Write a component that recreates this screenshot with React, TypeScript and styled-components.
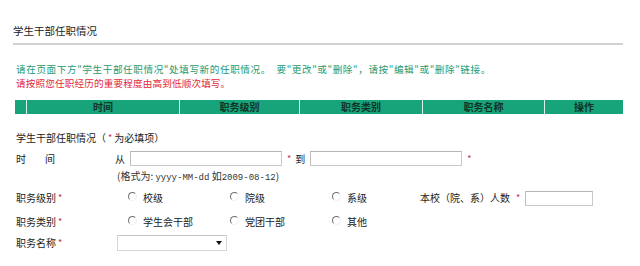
import React from 'react';
import styled, { createGlobalStyle } from 'styled-components';

const GlobalStyle = createGlobalStyle`
  html, body {
    margin: 0;
    padding: 0;
    background: #fff;
  }
  body {
    font-family: "Noto Sans CJK SC", "Liberation Sans", sans-serif;
    font-size: 10px;
    color: #222;
  }
`;

const Page = styled.div`
  width: 610px;
  margin-left: 13px;
  padding-top: 24px;
`;

const Title = styled.div`
  height: 14px;
  line-height: 14px;
  font-size: 10.5px;
  color: #1a1a1a;
`;

const Rule = styled.div`
  margin-top: 5px;
  height: 2px;
  background: #d2d2d2;
`;

const Notice = styled.div`
  margin-top: 17px;
  padding-left: 3px;
`;

const NoticeLine = styled.div<{ $tone: 'green' | 'red' }>`
  height: 14px;
  line-height: 14px;
  font-size: 9.6px;
  white-space: nowrap;
  letter-spacing: ${p => (p.$tone === 'green' ? '0.6px' : '0.15px')};
  color: ${p => (p.$tone === 'green' ? '#249a70' : '#e2283a')};
`;

const HeaderBar = styled.div`
  margin: 10px 0 0 2px;
  width: 608px;
  height: 14px;
  display: grid;
  grid-template-columns: 12px 153px 120px 123px 122px 78px;
  background: #18a47a;
`;

const HeaderCell = styled.div`
  line-height: 14px;
  text-align: center;
  font-weight: bold;
  font-size: 10px;
  color: #0f3326;
  border-right: 1px solid #d8f2e8;

  &:last-child {
    border-right: none;
  }
`;

const Form = styled.div`
  margin-top: 15px;
  padding-left: 3px;
`;

const Row = styled.div<{ $h: number; $mt?: number }>`
  height: ${p => p.$h}px;
  margin-top: ${p => p.$mt ?? 0}px;
  display: grid;
  grid-template-columns: 99px 1fr;
  align-items: center;
  line-height: 14px;
  white-space: nowrap;
`;

const FullRow = styled.div<{ $h: number }>`
  height: ${p => p.$h}px;
  display: flex;
  align-items: center;
  white-space: nowrap;
`;

const Label = styled.div`
  display: flex;
  align-items: center;
`;

const Spaced = styled.span`
  display: inline-block;
  width: 29px;
`;

const Star = styled.span`
  color: #c3304c;
  font-size: 9px;
  margin: 0 2px;
`;

const Field = styled.div`
  display: flex;
  align-items: center;
`;

const TextBox = styled.input<{ $w: number }>`
  box-sizing: border-box;
  width: ${p => p.$w}px;
  height: 15px;
  padding: 0 2px;
  border: 1px solid #c9c9c9;
  border-top-color: #b5b5b5;
  border-left-color: #bdbdbd;
  background: #fff;
  font-size: 10px;
  outline: none;
`;

const Word = styled.span<{ $ml?: number; $mr?: number }>`
  margin-left: ${p => p.$ml ?? 0}px;
  margin-right: ${p => p.$mr ?? 0}px;
`;

const Hint = styled.span`
  margin-left: 2px;
  font-size: 10px;
  color: #333;
`;

const Mono = styled.span`
  font-family: "Liberation Mono", "DejaVu Sans Mono", monospace;
  font-size: 9px;
  letter-spacing: 0;
`;

const RadioGroup = styled.div<{ $cols: string }>`
  display: grid;
  grid-template-columns: ${p => p.$cols};
  align-items: center;
  padding-left: 13px;
`;

const RadioOption = styled.label`
  display: flex;
  align-items: center;
  gap: 6px;
`;

const RadioDot = styled.span`
  box-sizing: border-box;
  width: 9px;
  height: 9px;
  margin-top: -3px;
  border-radius: 50%;
  border: 1px solid;
  border-color: #6f6f6f #f0f0f0 #f0f0f0 #6f6f6f;
  background: #fff;
`;

const CountField = styled.div`
  display: flex;
  align-items: center;
`;

const SelectWrap = styled.div`
  position: relative;
  width: 110px;
  height: 16px;
  margin-left: 2px;
`;

const Select = styled.select`
  box-sizing: border-box;
  appearance: none;
  width: 100%;
  height: 100%;
  border: 1px solid #d6d6d6;
  border-top-color: #c4c4c4;
  background: #fff;
  font-size: 10px;
  outline: none;
`;

const Caret = styled.span`
  position: absolute;
  right: 5px;
  top: 6px;
  width: 0;
  height: 0;
  border-left: 3px solid transparent;
  border-right: 3px solid transparent;
  border-top: 4px solid #111;
  pointer-events: none;
`;

const columns = ['', '时间', '职务级别', '职务类别', '职务名称', '操作'];

const Radio = ({ text }: { text: string }) => (
  <RadioOption>
    <RadioDot />
    <span>{text}</span>
  </RadioOption>
);

export default function App() {
  return (
    <Page>
      <GlobalStyle />
      <Title>学生干部任职情况</Title>
      <Rule />

      <Notice>
        <NoticeLine $tone="green">
          请在页面下方"学生干部任职情况"处填写新的任职情况。&nbsp;&nbsp;要"更改"或"删除"，请按"编辑"或"删除"链接。
        </NoticeLine>
        <NoticeLine $tone="red">请按照您任职经历的重要程度由高到低顺次填写。</NoticeLine>
      </Notice>

      <HeaderBar>
        {columns.map((c, i) => (
          <HeaderCell key={i}>{c}</HeaderCell>
        ))}
      </HeaderBar>

      <Form>
        <FullRow $h={16}>
          学生干部任职情况（<Star>*</Star>为必填项）
        </FullRow>

        <Row $h={17} $mt={5}>
          <Label>
            <Spaced>时</Spaced>间
          </Label>
          <Field>
            <Word $mr={5}>从</Word>
            <TextBox $w={152} />
            <Star style={{ marginLeft: 5 }}>*</Star>
            <Word $ml={2} $mr={5}>到</Word>
            <TextBox $w={152} />
            <Star style={{ marginLeft: 5 }}>*</Star>
          </Field>
        </Row>

        <Row $h={20}>
          <span />
          <Hint>
            (格式为: <Mono>yyyy-MM-dd</Mono> 如<Mono>2009-08-12</Mono>)
          </Hint>
        </Row>

        <Row $h={22}>
          <Label>
            职务级别<Star>*</Star>
          </Label>
          <RadioGroup $cols="102px 102px 88px auto">
            <Radio text="校级" />
            <Radio text="院级" />
            <Radio text="系级" />
            <CountField>
              本校（院、系）人数
              <Star style={{ margin: '0 5px 0 6px' }}>*</Star>
              <TextBox $w={68} />
            </CountField>
          </RadioGroup>
        </Row>

        <Row $h={26}>
          <Label>
            职务类别<Star>*</Star>
          </Label>
          <RadioGroup $cols="102px 102px auto">
            <Radio text="学生会干部" />
            <Radio text="党团干部" />
            <Radio text="其他" />
          </RadioGroup>
        </Row>

        <Row $h={16}>
          <Label>
            职务名称<Star>*</Star>
          </Label>
          <SelectWrap>
            <Select defaultValue="">
              <option value=""></option>
            </Select>
            <Caret />
          </SelectWrap>
        </Row>
      </Form>
    </Page>
  );
}
